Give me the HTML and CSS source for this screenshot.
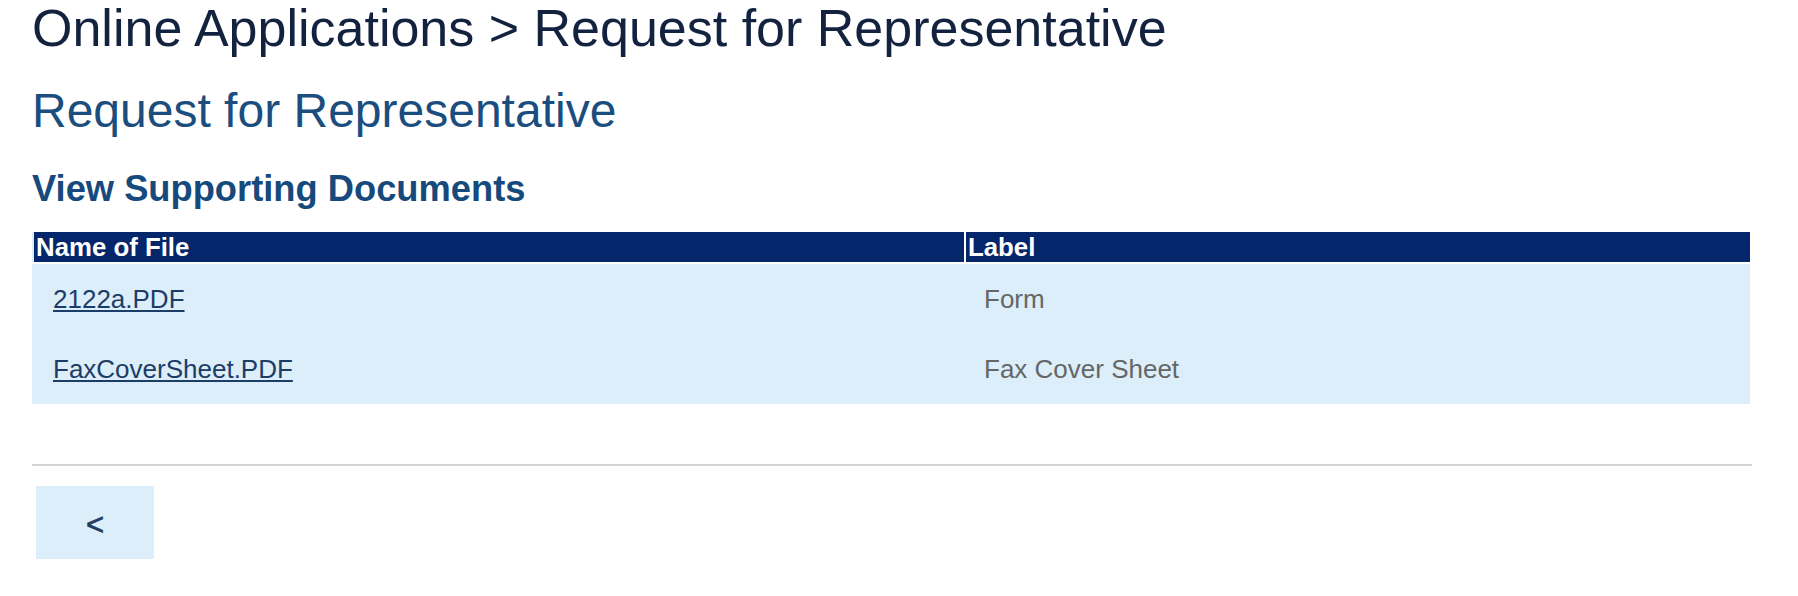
FILE: index.html
```html
<!DOCTYPE html>
<html lang="en">
<head>
<meta charset="utf-8">
<title>Request for Representative</title>
<link rel="stylesheet" href="styles.css">
</head>
<body>
<div class="page">
  <h1 class="crumb">Online Applications &gt; Request for Representative</h1>
  <h2 class="title">Request for Representative</h2>
  <h3 class="section">View Supporting Documents</h3>
  <table class="docs">
    <thead>
      <tr><th class="col-name">Name of File</th><th class="col-label">Label</th></tr>
    </thead>
    <tbody>
      <tr><td><a href="#">2122a.PDF</a></td><td class="label">Form</td></tr>
      <tr><td><a href="#">FaxCoverSheet.PDF</a></td><td class="label">Fax Cover Sheet</td></tr>
    </tbody>
  </table>
  <hr class="rule">
  <button class="back" type="button">&lt;</button>
</div>
</body>
</html>
```

FILE: styles.css
```css
html, body {
  margin: 0;
  padding: 0;
  background: #ffffff;
}

body {
  font-family: "Liberation Sans", Arial, Helvetica, sans-serif;
}

.page {
  padding: 0 48px 0 32px;
}

.crumb {
  margin: 2px 0 0 0;
  font-size: 52px;
  line-height: 52px;
  font-weight: normal;
  color: #13223f;
}

.title {
  margin: 33px 0 0 0;
  font-size: 48px;
  line-height: 48px;
  font-weight: normal;
  color: #1b4d7e;
}

.section {
  margin: 36px 0 0 0;
  font-size: 36.3px;
  line-height: 36px;
  font-weight: bold;
  color: #174a7c;
}

.docs {
  margin-top: 25px;
  width: 100%;
  border-collapse: collapse;
  background: #dbeef9;
}

.docs th {
  background: #05266a;
  color: #ffffff;
  font-size: 25.8px;
  line-height: 30px;
  font-weight: bold;
  text-align: left;
  padding: 0 0 0 2px;
  border-bottom: 2px solid #ffffff;
}

.docs th.col-name {
  width: 928px;
  border-left: 2px solid #dbeef9;
  border-right: 2px solid #ffffff;
}

.docs td {
  height: 70px;
  padding: 0 0 0 20px;
  font-size: 26px;
  line-height: 30px;
  vertical-align: middle;
}

.docs td + td {
  padding-left: 19px;
}

.docs a {
  color: #1b3d68;
  text-decoration: underline;
}

.docs .label {
  color: #666666;
}

.rule {
  margin: 60px -2px 0 0;
  border: 0;
  height: 2px;
  background: #d4d4d4;
}

.back {
  display: flex;
  align-items: center;
  justify-content: center;
  margin: 20px 0 0 4px;
  width: 118px;
  height: 73px;
  border: 0;
  padding: 5px 0 0 0;
  background: #dbeef9;
  color: #1f3a63;
  font-family: "Liberation Sans", Arial, sans-serif;
  font-size: 31px;
  font-weight: normal;
  -webkit-text-stroke: 0.6px #1f3a63;
}
```
